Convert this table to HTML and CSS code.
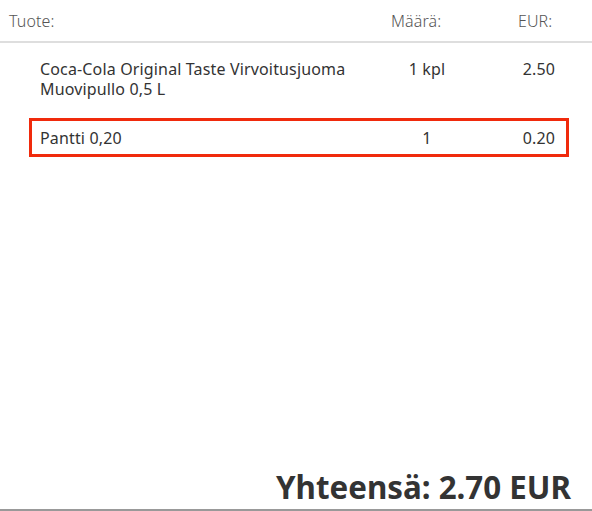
FILE: index.html
```html
<!DOCTYPE html>
<html lang="fi">
<head>
<meta charset="utf-8">
<link rel="stylesheet" href="styles.css">
</head>
<body>
<div class="receipt">
  <div class="head">
    <div>Tuote:</div>
    <div>Määrä:</div>
    <div>EUR:</div>
  </div>
  <div class="items">
    <div class="row">
      <div class="name">Coca-Cola Original Taste Virvoitusjuoma<br>Muovipullo 0,5 L</div>
      <div class="qty">1 kpl</div>
      <div class="price">2.50</div>
    </div>
    <div class="row highlight">
      <div class="name">Pantti 0,20</div>
      <div class="qty">1</div>
      <div class="price">0.20</div>
    </div>
  </div>
  <div class="total">Yhteensä: 2.70 EUR</div>
</div>
</body>
</html>
```
FILE: styles.css
```css
html, body {
  margin: 0;
  padding: 0;
  background: #fff;
}
body {
  font-family: "Noto Sans", "Open Sans", sans-serif;
  color: #333;
}
.receipt {
  width: 592px;
  height: 511px;
  display: flex;
  flex-direction: column;
}
.head {
  display: grid;
  grid-template-columns: 382px 127px 1fr;
  align-items: center;
  height: 41px;
  padding-left: 9px;
  border-bottom: 2px solid #dedede;
  font-size: 16px;
  font-weight: 300;
  letter-spacing: 0.1px;
  color: #555;
}
.items {
  flex: 1;
  padding-top: 13px;
}
.row {
  display: grid;
  grid-template-columns: 1fr 80px 88px;
  margin: 0 23px 0 29px;
  padding: 0 11px 0 8px;
  border: 3px solid transparent;
  font-size: 16px;
  line-height: 20px;
  letter-spacing: 0.15px;
}
.row + .row {
  margin-top: 16px;
}
.highlight {
  border-color: #f02a0c;
  padding-top: 7px;
  padding-bottom: 6px;
}
.qty {
  text-align: center;
}
.price {
  text-align: right;
}
.total {
  align-self: stretch;
  text-align: right;
  padding-right: 21px;
  font-size: 31.3px;
  font-weight: 700;
  line-height: 38px;
  padding-bottom: 3px;
  border-bottom: 2px solid #999;
}
```
